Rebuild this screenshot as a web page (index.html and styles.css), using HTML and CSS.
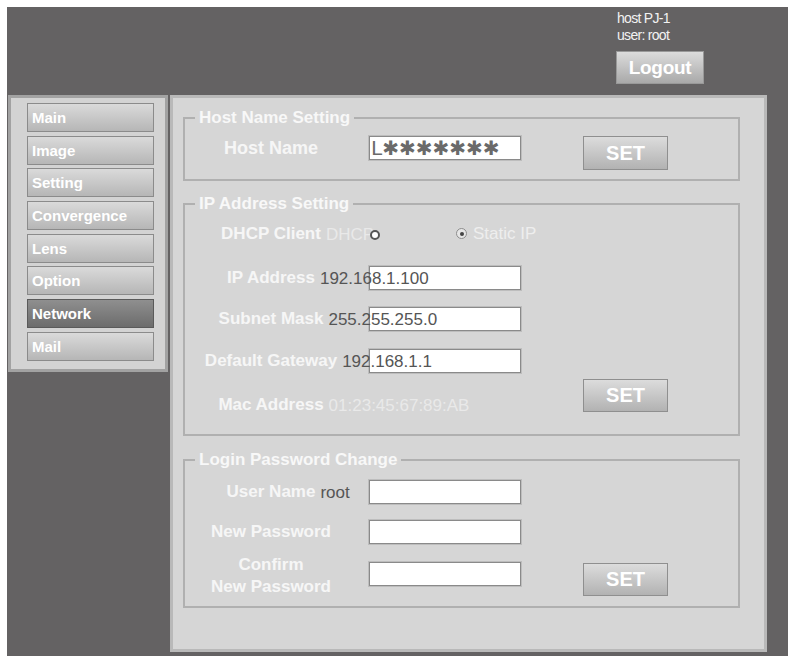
FILE: index.html
```html
<!DOCTYPE html>
<html lang="en">
  <head>
    <meta charset="UTF-8" />
    <title>Network</title>
    <link rel="stylesheet" href="styles.css">
  </head>
  <body>
    <div class="frame">
      <div class="top">
        <div class="account">
          <div class="line">host PJ-1</div>
          <div class="line">user: root</div>
          <button class="logout">Logout</button>
        </div>
      </div>
      <div class="main">
        <div class="menu">
          <div class="item">Main</div>
          <div class="item">Image</div>
          <div class="item">Setting</div>
          <div class="item">Convergence</div>
          <div class="item">Lens</div>
          <div class="item">Option</div>
          <div class="item active">Network</div>
          <div class="item">Mail</div>
        </div>
        <div class="content">
          <fieldset class="group host-group">
            <legend>Host Name Setting</legend>
            <div class="row">
              <div class="label"><span class="name big">Host Name</span></div>
              <div class="field"><input class="text host" type="text" value="L✱✱✱✱✱✱✱" /></div>
              <button class="set tall">SET</button>
            </div>
          </fieldset>

          <fieldset class="group ip-group">
            <legend>IP Address Setting</legend>
            <div class="row dhcp">
              <div class="label">
                <span class="name">DHCP Client<span class="val light">DHCP<span class="radio"></span></span></span>
              </div>
              <div class="field static">
                <span class="radio checked"></span><span class="static-text">Static IP</span>
              </div>
            </div>
            <div class="row ip">
              <div class="label"><span class="name">IP Address<span class="val">192.168.1.100</span></span></div>
              <div class="field"><input class="text" type="text" /></div>
            </div>
            <div class="row mask">
              <div class="label"><span class="name">Subnet Mask<span class="val">255.255.255.0</span></span></div>
              <div class="field"><input class="text" type="text" /></div>
            </div>
            <div class="row gateway">
              <div class="label"><span class="name">Default Gateway<span class="val">192.168.1.1</span></span></div>
              <div class="field"><input class="text" type="text" /></div>
            </div>
            <div class="row mac">
              <div class="label"><span class="name">Mac Address<span class="val light">01:23:45:67:89:AB</span></span></div>
              <div class="field"></div>
              <button class="set">SET</button>
            </div>
          </fieldset>

          <fieldset class="group login-group">
            <legend>Login Password Change</legend>
            <div class="row">
              <div class="label"><span class="name">User Name<span class="val">root</span></span></div>
              <div class="field"><input class="text" type="text" /></div>
            </div>
            <div class="row newpass">
              <div class="label"><span class="name">New Password</span></div>
              <div class="field"><input class="text" type="password" /></div>
            </div>
            <div class="row confirm">
              <div class="label"><span class="name">Confirm<br />New Password</span></div>
              <div class="field"><input class="text" type="password" /></div>
              <button class="set">SET</button>
            </div>
          </fieldset>
        </div>
      </div>
    </div>
  </body>
</html>
```

FILE: styles.css
```css
html,
body {
  margin: 0;
  background: white;
  overflow: hidden;
}
body {
  font-family: "Liberation Sans", Arial, sans-serif;
}
.frame {
  margin: 7px 0 0 7px;
  width: 781px;
  height: 649px;
  background: #646263;
}

/* header */
.top {
  box-sizing: border-box;
  height: 88px;
  padding: 3px 84px 0 0;
  display: flex;
  justify-content: flex-end;
}
.account {
  width: 88px;
  color: #f2f2f2;
}
.account .line {
  font-size: 14px;
  letter-spacing: -0.7px;
  line-height: 17px;
  padding-left: 1px;
}
.logout {
  display: block;
  margin-top: 7px;
  width: 88px;
  height: 33px;
  border: 1px solid #999;
  background: linear-gradient(#dcdcdc, #a9a9a9);
  color: white;
  font-family: inherit;
  font-weight: bold;
  font-size: 19px;
  letter-spacing: -0.3px;
  padding: 0;
}

/* body */
.main {
  display: flex;
  align-items: flex-start;
}
.menu {
  box-sizing: border-box;
  width: 160px;
  margin-left: 1px;
  border: 3px solid #a2a2a2;
  background: #d3d3d3;
  padding: 5px 11px 8px 16px;
}
.item {
  box-sizing: border-box;
  height: 29px;
  margin-bottom: 3.7px;
  border: 1px solid #8b8b8b;
  background: linear-gradient(#dadada, #b6b6b6);
  color: white;
  font-weight: bold;
  font-size: 15px;
  line-height: 27px;
  padding-left: 4px;
}
.item:last-child {
  margin-bottom: 0;
}
.item.active {
  background: linear-gradient(#8f8f8f, #6c6c6c);
  border-color: #5a5a5a;
}
.content {
  box-sizing: border-box;
  width: 597px;
  height: 557px;
  margin-left: 2px;
  border: 3px solid #b9b9b9;
  background: #d6d6d6;
  padding: 0 24px 0 10px;
}

/* groups */
.group {
  margin: 14px 0 0;
  padding: 9px 0;
  border: 2px solid #b0b0b0;
  min-width: 0;
}
.host-group {
  margin-top: 11px;
}
.ip-group {
  padding-bottom: 17px;
}
.login-group {
  margin-top: 15px;
  padding: 11px 0 8px;
}
.group legend {
  margin-left: 10px;
  padding: 0 4px;
  color: #f8f8f8;
  font-weight: bold;
  font-size: 17px;
  line-height: 18px;
}
.row {
  display: grid;
  grid-template-columns: 184px 214px 85px;
  align-items: start;
}
.label {
  padding-right: 12px;
  text-align: center;
  line-height: 24px;
}
.name {
  position: relative;
  color: #f6f6f6;
  font-weight: bold;
  font-size: 17px;
}
.name.big {
  font-size: 18px;
}
.val {
  position: absolute;
  left: 100%;
  top: -1px;
  margin-left: 5px;
  z-index: 1;
  white-space: nowrap;
  font-weight: normal;
  color: #555;
}
.val.light {
  color: #e9e9e9;
}
.text {
  box-sizing: border-box;
  display: block;
  width: 152px;
  height: 24px;
  margin: 0;
  padding: 0 2px;
  border: 1px solid #8a8a8a;
  box-shadow: 0 0 0 1px #bdbdbd;
  background: white;
  font-family: inherit;
  font-size: 17px;
  color: #333;
}
.text.host {
  font-family: "DejaVu Sans", sans-serif;
  font-size: 20px;
  color: #6a6a6a;
  padding-left: 1px;
}
.set {
  box-sizing: border-box;
  width: 85px;
  height: 33px;
  padding: 0;
  border: 1px solid #8f8f8f;
  background: linear-gradient(#dcdcdc, #b2b2b2);
  color: white;
  font-family: inherit;
  font-weight: bold;
  font-size: 20px;
}
.set.tall {
  height: 34px;
}

/* radio buttons */
.radio {
  display: inline-block;
  box-sizing: border-box;
  width: 10px;
  height: 10px;
  margin-left: -4px;
  border: 2px solid #555;
  border-radius: 50%;
  background: white;
  vertical-align: 0;
}
.radio.checked {
  position: relative;
  width: 11px;
  height: 11px;
  margin-left: 0;
  border: 1px solid #8d8d8d;
  background: #e6e6e6;
}
.radio.checked::after {
  content: "";
  position: absolute;
  left: 2.5px;
  top: 2.5px;
  width: 4px;
  height: 4px;
  border-radius: 50%;
  background: #444;
}
.static {
  padding-left: 87px;
  line-height: 24px;
}
.static-text {
  margin-left: 6px;
  color: #eeeeee;
  font-size: 17px;
}

/* row spacing */
.row.ip {
  margin-top: 20px;
}
.row.mask {
  margin-top: 17px;
}
.row.gateway {
  margin-top: 18px;
}
.row.mac {
  margin-top: 6px;
  height: 38px;
}
.row.mac .label {
  align-self: end;
}
.row.newpass {
  margin-top: 16px;
}
.row.confirm {
  margin-top: 10px;
}
.row.confirm .label {
  line-height: 22px;
}
.row.confirm .field {
  padding-top: 8px;
}
.row.confirm .set {
  margin-top: 9px;
}
```
